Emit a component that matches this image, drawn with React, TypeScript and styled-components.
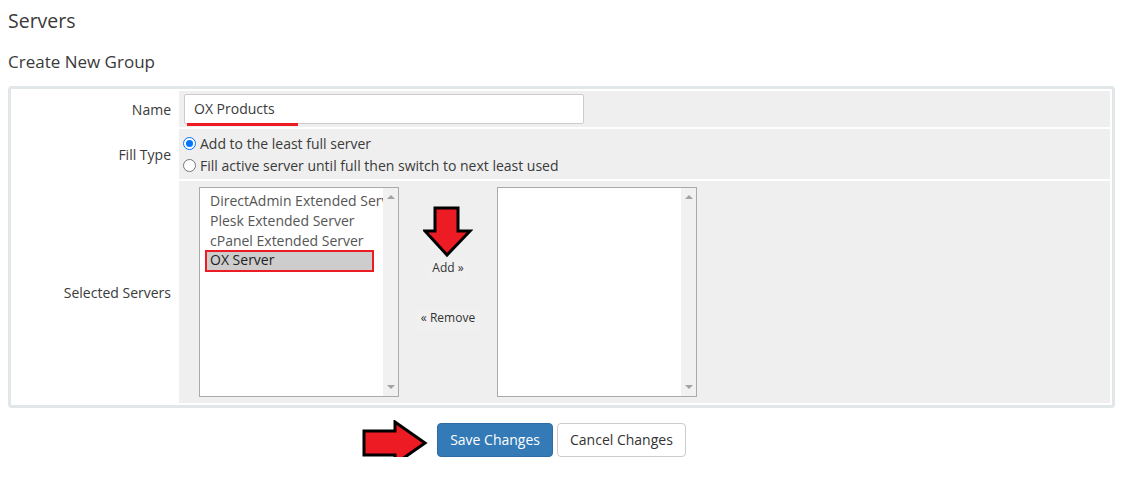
import styled, { createGlobalStyle } from 'styled-components'

const GlobalStyle = createGlobalStyle`
  body {
    margin: 0;
    background: #fff;
    font-family: 'Open Sans', 'Liberation Sans', sans-serif;
    color: #333;
  }
`

const Page = styled.div`
  padding: 0 6px 0 8px;
`

const Title = styled.h1`
  margin: 0;
  padding-top: 8px;
  height: 34px;
  font-size: 19.5px;
  font-weight: 400;
  line-height: 26px;
  color: #3a3a3a;
`

const SubTitle = styled.h2`
  margin: 0;
  padding-top: 9px;
  height: 35px;
  font-size: 17px;
  font-weight: 400;
  line-height: 22px;
  color: #3a3a3a;
`

const Panel = styled.div`
  border: 3px solid #e1e6e9;
  border-radius: 4px;
  padding: 2px;
  display: grid;
  grid-template-columns: 164px 1fr;
  grid-auto-rows: auto;
  gap: 2px;
`

const Label = styled.div`
  display: flex;
  align-items: center;
  justify-content: flex-end;
  padding-right: 6px;
  font-size: 14px;
  color: #3a3a3a;
`

const Field = styled.div<{ height: number }>`
  background: #efefef;
  height: ${p => p.height}px;
  box-sizing: border-box;
  display: flex;
`

const NameField = styled(Field)`
  align-items: center;
  padding-left: 5px;
`

const InputWrap = styled.div`
  position: relative;
`

const TextInput = styled.div`
  width: 400px;
  height: 30px;
  box-sizing: border-box;
  background: #fff;
  border: 1px solid #ccc;
  border-radius: 2px;
  padding-left: 9px;
  font-size: 14px;
  line-height: 28px;
  color: #3a3a3a;
`

const Underline = styled.div`
  position: absolute;
  left: 3px;
  top: 29px;
  width: 111px;
  height: 3px;
  background: #ed1c24;
`

const RadioField = styled(Field)`
  flex-direction: column;
  justify-content: center;
  padding-left: 4px;
  gap: 3px;
`

const RadioRow = styled.label`
  display: flex;
  align-items: center;
  gap: 4px;
  font-size: 14px;
  line-height: 19px;
  color: #3a3a3a;
`

const Radio = styled.span<{ checked?: boolean }>`
  width: 13px;
  height: 13px;
  box-sizing: border-box;
  border-radius: 50%;
  border: 1px solid ${p => (p.checked ? '#0075ff' : '#767676')};
  background: #fff;
  display: flex;
  align-items: center;
  justify-content: center;
  &::after {
    content: '';
    display: ${p => (p.checked ? 'block' : 'none')};
    width: 7px;
    height: 7px;
    border-radius: 50%;
    background: #0075ff;
  }
`

const ServersField = styled(Field)`
  padding: 6px 0 0 20px;
  align-items: flex-start;
`

const ListBox = styled.div`
  width: 200px;
  height: 210px;
  box-sizing: border-box;
  border: 1px solid #aaa;
  background: #fff;
  display: flex;
`

const ListItems = styled.div`
  flex: 1;
  padding: 3px 0 0 6px;
  overflow: hidden;
  min-width: 0;
`

const Item = styled.div<{ selected?: boolean }>`
  font-size: 14px;
  white-space: nowrap;
  overflow: hidden;
  box-sizing: border-box;
  color: ${p => (p.selected ? '#222' : '#555')};
  padding-left: ${p => (p.selected ? '3px' : '4px')};
  margin-right: ${p => (p.selected ? '9px' : '0')};
  background: ${p => (p.selected ? '#cdcdcd' : 'transparent')};
  border: ${p => (p.selected ? '2px solid #ed1c24' : 'none')};
  line-height: ${p => (p.selected ? '16px' : '20px')};
  height: ${p => (p.selected ? '22px' : '20px')};
  margin-left: ${p => (p.selected ? '-1px' : '0')};
  margin-top: ${p => (p.selected ? '-1px' : '0')};
`

const ScrollTrack = styled.div`
  width: 15px;
  background: #f1f1f1;
  display: flex;
  flex-direction: column;
  justify-content: space-between;
  align-items: center;
  padding: 7px 0;
`

const TriUp = styled.span`
  width: 0;
  height: 0;
  border-left: 4px solid transparent;
  border-right: 4px solid transparent;
  border-bottom: 4px solid #a3a3a3;
`

const TriDown = styled.span`
  width: 0;
  height: 0;
  border-left: 4px solid transparent;
  border-right: 4px solid transparent;
  border-top: 4px solid #a3a3a3;
`

const MoveColumn = styled.div`
  width: 98px;
  display: flex;
  flex-direction: column;
  align-items: center;
  padding-top: 19px;
`

const MoveButton = styled.div<{ mt: number }>`
  margin-top: ${p => p.mt}px;
  padding: 0 6px;
  height: 22px;
  line-height: 20px;
  font-size: 12px;
  color: #333;
  background: #f0f0f0;
`

const ButtonRow = styled.div`
  position: relative;
  display: flex;
  justify-content: center;
  gap: 4px;
  padding: 15px 0 0 0;
`

const Button = styled.div<{ primary?: boolean }>`
  height: 34px;
  box-sizing: border-box;
  padding: 0 12px;
  border-radius: 4px;
  font-size: 14px;
  line-height: 32px;
  border: 1px solid ${p => (p.primary ? '#2e6da4' : '#ccc')};
  background: ${p => (p.primary ? '#337ab7' : '#fff')};
  color: ${p => (p.primary ? '#fff' : '#333')};
`

const SideArrow = styled.svg`
  position: absolute;
  left: 354px;
  top: 12px;
`

const DownArrow = () => (
  <svg width="50" height="52" viewBox="0 0 50 52">
    <polygon
      points="12,2 35,2 35,25 47,25 24,49 2,25 12,25"
      fill="#ed1c24"
      stroke="#000"
      strokeWidth="3"
      strokeLinejoin="miter"
    />
  </svg>
)

const servers = ['DirectAdmin Extended Server', 'Plesk Extended Server', 'cPanel Extended Server', 'OX Server']

const App = () => (
  <>
    <GlobalStyle />
    <Page>
      <Title>Servers</Title>
      <SubTitle>Create New Group</SubTitle>
      <Panel>
        <Label>Name</Label>
        <NameField height={36}>
          <InputWrap>
            <TextInput>OX Products</TextInput>
            <Underline />
          </InputWrap>
        </NameField>

        <Label>Fill Type</Label>
        <RadioField height={50}>
          <RadioRow>
            <Radio checked />
            Add to the least full server
          </RadioRow>
          <RadioRow>
            <Radio />
            Fill active server until full then switch to next least used
          </RadioRow>
        </RadioField>

        <Label>Selected Servers</Label>
        <ServersField height={222}>
          <ListBox>
            <ListItems>
              {servers.map(s => (
                <Item key={s} selected={s === 'OX Server'}>
                  {s}
                </Item>
              ))}
            </ListItems>
            <ScrollTrack>
              <TriUp />
              <TriDown />
            </ScrollTrack>
          </ListBox>
          <MoveColumn>
            <DownArrow />
            <MoveButton mt={0}>Add »</MoveButton>
            <MoveButton mt={28}>« Remove</MoveButton>
          </MoveColumn>
          <ListBox>
            <ListItems />
            <ScrollTrack>
              <TriUp />
              <TriDown />
            </ScrollTrack>
          </ListBox>
        </ServersField>
      </Panel>
      <ButtonRow>
        <SideArrow width="70" height="46" viewBox="0 0 70 46">
          <polygon
            points="2,11 33,11 33,2 63,23 33,44 33,35 2,35"
            fill="#ed1c24"
            stroke="#000"
            strokeWidth="3"
          />
        </SideArrow>
        <Button primary>Save Changes</Button>
        <Button>Cancel Changes</Button>
      </ButtonRow>
    </Page>
  </>
)

export default App
